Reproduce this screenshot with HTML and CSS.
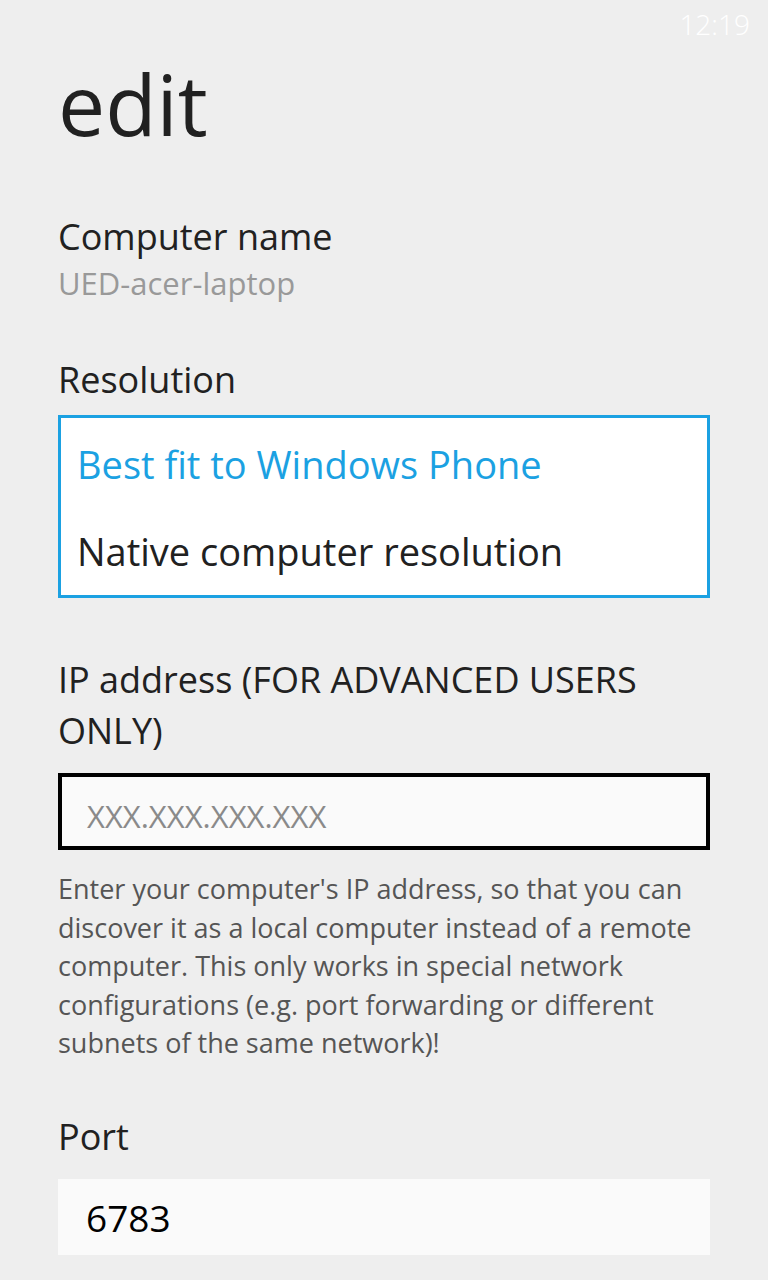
FILE: index.html
```html
<!DOCTYPE html>
<html>

<head>
    <meta charset="UTF-8">
    <title>edit</title>
    <link rel="stylesheet" href="styles.css">
</head>

<body>
    <div class="status-bar">
        <span class="clock">12:19</span>
    </div>

    <div class="page">
        <h1>edit</h1>

        <div class="field">
            <div class="label">Computer name</div>
            <div class="value">UED-acer-laptop</div>
        </div>

        <div class="field">
            <div class="label">Resolution</div>
            <div class="picker">
                <div class="option selected">Best fit to Windows Phone</div>
                <div class="option">Native computer resolution</div>
            </div>
        </div>

        <div class="field field-ip">
            <div class="label">IP address (FOR ADVANCED USERS ONLY)</div>
            <div class="textbox focused">
                <span class="placeholder">XXX.XXX.XXX.XXX</span>
            </div>
            <div class="hint">
                Enter your computer's IP address, so that you can discover it as a local computer instead of a remote computer. This only works in special network configurations (e.g. port forwarding or different subnets of the same network)!
            </div>
        </div>

        <div class="field field-port">
            <div class="label">Port</div>
            <div class="textbox">
                <span class="text">6783</span>
            </div>
        </div>
    </div>
</body>

</html>
```

FILE: styles.css
```css
body {
    margin: 0;
    background-color: #eeeeee;
    font-family: "Open Sans", "Noto Sans", sans-serif;
    color: #212121;
}

.status-bar {
    height: 48px;
    display: flex;
    justify-content: flex-end;
    align-items: center;
    padding-right: 18px;
}

.clock {
    color: #ffffff;
    font-size: 28px;
    font-weight: 300;
}

.page {
    display: flex;
    flex-direction: column;
    padding: 0 58px;
}

h1 {
    margin: 6px 0 6px 0;
    font-size: 84px;
    font-weight: 400;
    line-height: 100px;
}

.field {
    margin-top: 51px;
}

.field-ip {
    margin-top: 56px;
}

.field-port {
    margin-top: 48px;
}

.label {
    font-size: 36px;
    line-height: 51px;
}

.value {
    margin-top: 1px;
    font-size: 31px;
    line-height: 40px;
    color: #999999;
}

.picker {
    margin-top: 10px;
    background-color: #ffffff;
    border: 3px solid #1ba1e2;
    padding: 3px 16px 0 16px;
}

.option {
    font-size: 38px;
    line-height: 87px;
}

.option.selected {
    color: #1ba1e2;
}

.textbox {
    margin-top: 17px;
    background-color: #fafafa;
    height: 76px;
    padding: 2px 28px 0 28px;
    display: flex;
    align-items: center;
    box-sizing: border-box;
}

.textbox.focused {
    height: 77px;
    border: 4px solid #000000;
    padding: 8px 25px 0 25px;
}

.placeholder {
    font-size: 31px;
    color: #8a8a8a;
}

.text {
    font-size: 37px;
    color: #000000;
}

.hint {
    margin-top: 20px;
    font-size: 27px;
    line-height: 38.5px;
    color: #555555;
}
```
